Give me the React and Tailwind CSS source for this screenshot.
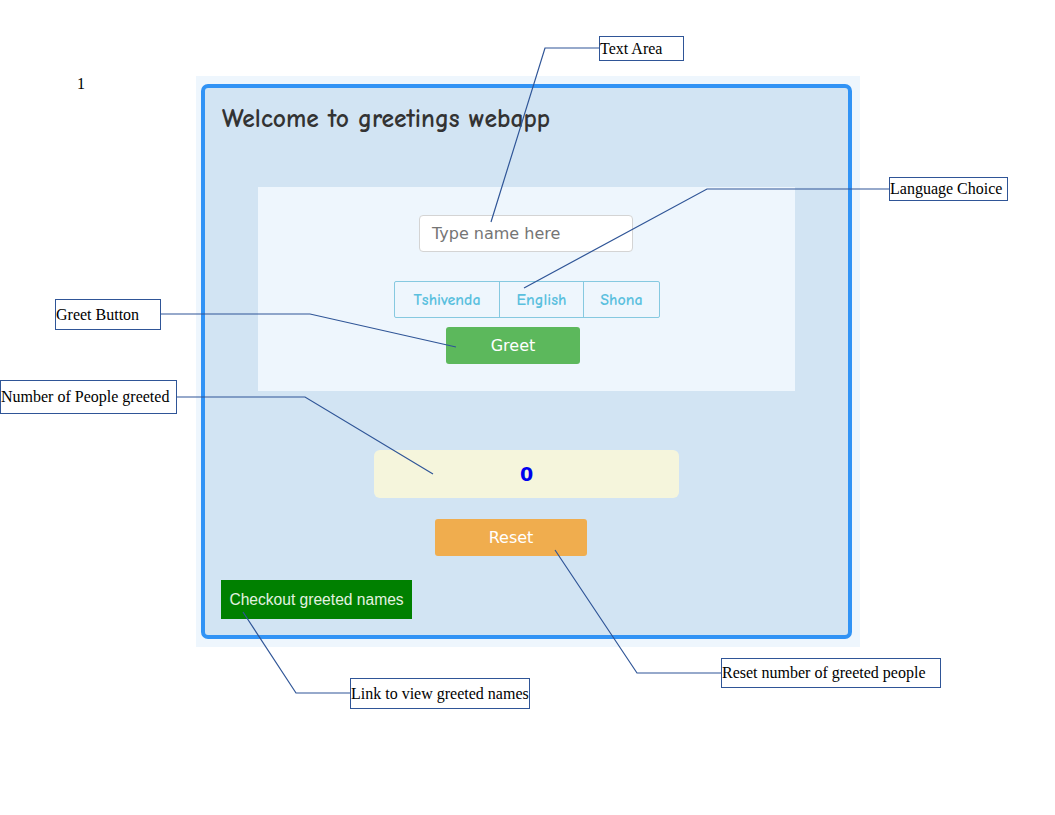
export default function App() {
  const comic = "font-['Comic_Sans_MS','Comic_Neue',cursive]";
  const serif = "font-['Liberation_Serif',serif]";
  const dejavu = "font-['DejaVu_Sans',sans-serif]";
  const boxes = [
    { t: "Text Area", l: 599, tp: 36, w: 85, h: 25 },
    { t: "Language Choice", l: 889, tp: 177, w: 119, h: 24 },
    { t: "Greet Button", l: 55, tp: 299, w: 106, h: 31 },
    { t: "Number of People greeted", l: 0, tp: 380, w: 177, h: 34 },
    { t: "Reset number of greeted people", l: 721, tp: 658, w: 220, h: 30 },
    { t: "Link to view greeted names", l: 350, tp: 678, w: 180, h: 31 },
  ];
  return (
    <div className="relative w-[1055px] h-[815px] bg-white overflow-hidden">
      <div className="flex pt-[76px]">
        <div className={`w-[196px] pl-[77px] -mt-[1px] text-[16px] leading-[18px] text-black ${serif}`}>1</div>
        <div className="w-[664px] h-[571px] bg-[#eef6fd] pl-[5px] pt-[8px]">
          <div className="w-[651px] h-[555px] border-4 border-[#3193f5] rounded-[7px] bg-[#d2e4f3] flex flex-col">
            <div className="h-[99px] pl-[17px] pt-[16px]">
              <h1 className={`text-[25.5px] leading-[30px] text-[#333] font-semibold ${comic}`}>Welcome to greetings webapp</h1>
            </div>
            <div className="mx-[53px] h-[204px] bg-[#eef6fd] flex flex-col pt-[28px]">
              <div className={`ml-[161px] w-[214px] h-[37px] bg-white border border-[#d4d4d4] rounded-[4px] flex items-center pl-[12px] text-[16px] text-[#757575] ${dejavu}`}>
                Type name here
              </div>
              <div className={`ml-[136px] mt-[29px] w-[266px] h-[37px] flex border border-[#86c9e0] rounded-[2px] text-[16px] font-semibold text-[#5bc0de] ${comic}`}>
                <div className="w-[105px] flex items-center justify-center border-r border-[#86c9e0]">Tshivenda</div>
                <div className="w-[84px] flex items-center justify-center border-r border-[#86c9e0]">English</div>
                <div className="flex-1 flex items-center justify-center">Shona</div>
              </div>
              <div className={`ml-[188px] mt-[9px] w-[134px] h-[37px] bg-[#5cb85c] rounded-[3px] flex items-center justify-center text-white text-[16px] ${dejavu}`}>
                Greet
              </div>
            </div>
            <div className={`ml-[169px] mt-[59px] w-[305px] h-[48px] bg-[#f5f5dc] rounded-[6px] flex items-center justify-center text-[#0000ee] font-bold text-[19px] ${dejavu}`}>
              0
            </div>
            <div className={`ml-[230px] mt-[21px] w-[152px] h-[37px] bg-[#f0ad4e] rounded-[3px] flex items-center justify-center text-white text-[16px] ${dejavu}`}>
              Reset
            </div>
            <div className="ml-[16px] mt-[24px] w-[191px] h-[39px] bg-[#008000] flex items-center justify-center text-[#e4f2e0] text-[15.6px] font-['Liberation_Sans',sans-serif]">
              Checkout greeted names
            </div>
          </div>
        </div>
      </div>

      <svg className="absolute left-0 top-0 pointer-events-none" width="1055" height="815">
        <g fill="none" stroke="#2f5597" strokeWidth="1.2">
          <polyline points="491,222 545,48 599,48" />
          <polyline points="524,288 707,189 889,189" />
          <polyline points="161,314 310,314 456,347" />
          <polyline points="177,397 305,397 433,474" />
          <polyline points="555,550 637,673 721,673" />
          <polyline points="243,612 296,693 350,693" />
        </g>
      </svg>

      {boxes.map((b) => (
        <div
          key={b.t}
          className={`absolute flex items-center bg-white border border-[#2f5597] text-[16px] leading-[18px] text-black whitespace-nowrap ${serif}`}
          style={{ left: b.l, top: b.tp, width: b.w, height: b.h }}
        >
          {b.t}
        </div>
      ))}
    </div>
  );
}
